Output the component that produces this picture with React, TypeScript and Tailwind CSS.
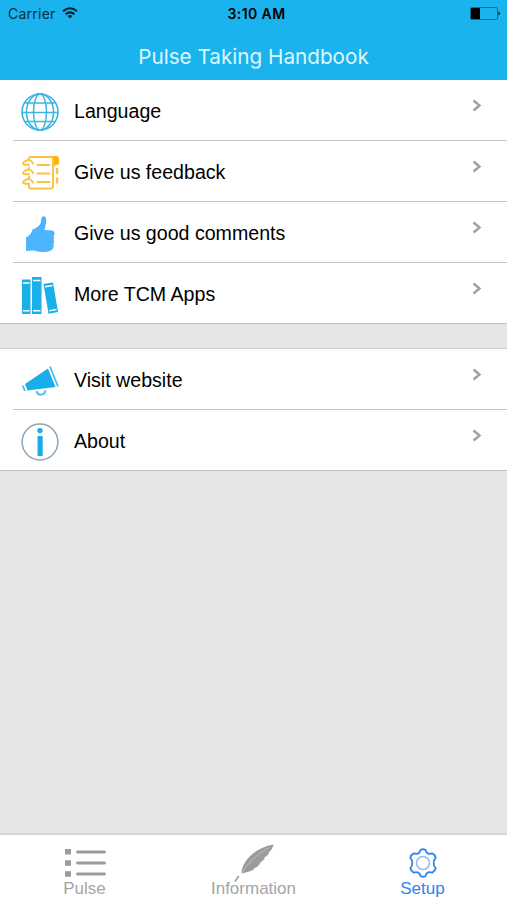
import type { ReactNode } from "react"

const GlobeIcon = () => (
  <svg width="38" height="38" viewBox="0 0 38 38" fill="none" stroke="#3db5e4" strokeWidth="1.5">
    <circle cx="19" cy="19" r="18" strokeWidth="1.6" />
    <ellipse cx="19" cy="19" rx="6.5" ry="18" />
    <ellipse cx="19" cy="19" rx="13.5" ry="18" />
    <path d="M1 19.5h36M3.5 10h31M3.5 28.5h31" />
  </svg>
)

const NotebookIcon = () => (
  <svg width="38" height="38" viewBox="0 -1 38 38" fill="none" stroke="#fcc340" strokeWidth="2" strokeLinecap="round">
    <path d="M8 4V4q0-2 2-2h22v29q0 2.500-2.500 2.500H10q-2 0-2-2V30M8 12.500v2M8 21.500v2" />
    <path d="M16.500 10h12M16.500 18.500h12M16.500 27h12" />
    <path d="M8 9.800H5.500q-3.500 0-3.500-1.500M3 7Q9 2.500 12 8.500M8 19.300H5.500q-3.500 0-3.500-1.500M3 16.500Q9 12 12 18M8 28.800H5.500q-3.500 0-3.500-1.500M3 26Q9 21.500 12 27.500" />
    <path d="M30 1h5q3 0 3 3v5l-5 2V5q0-3-3-4z" fill="#fdb515" stroke="none" />
    <path d="M36 13v6M36 22.500v6" strokeWidth="2.500" strokeLinecap="butt" />
  </svg>
)

const ThumbIcon = () => (
  <svg width="38" height="38" viewBox="0 0 38 38" fill="#4db5fd">
    <path d="M5 22.500Q10.500 19.500 11.500 14.500Q17 12.500 19.500 8.500L20.500 3Q21 .8 23 1.200C25.500 1.800 25.600 5 24.900 8.500L23.500 15L31 15.500Q34 16 33.500 19Q33.300 20.500 32.500 21Q33.800 22.500 32.700 25Q33.500 27 32.500 29Q33.300 31 31.800 34Q29 37.300 21 37Q16 36.800 13 35.500L5 36z" />
  </svg>
)

const BooksIcon = () => (
  <svg width="38" height="38" viewBox="0 0 38 38" fill="#19afe8">
    <path d="M1 3.500h8.500V38H1z" />
    <path d="M11 1h9.500v37H11z" />
    <path d="m22.500 8 9.500-1.500L37 36l-9.500 1.800z" />
    <path d="M2 7h6.500M2 34.800h6.500M12 4.500h7.500M12 34.800h7.500M24 10.700l7.500-1.300M28.300 34.700l7.200-1.300" stroke="#fff" strokeWidth="1.500" />
  </svg>
)

const MegaphoneIcon = () => (
  <svg width="38" height="38" viewBox="0 -1 38 38" fill="#1aaee8">
    <path d="M4 21 27 5.500l7.500 18.500L6.500 27.500z" />
    <path d="m1.500 22.500 2.500 5.500M29 3.500l8 20" fill="none" stroke="#4abdec" strokeWidth="1.800" />
    <path d="M15.500 28c1 5 8 5 9-.5" fill="none" stroke="#45bceb" strokeWidth="1.800" />
  </svg>
)

const InfoIcon = () => (
  <svg width="38" height="38" viewBox="0 0 38 38">
    <circle cx="19" cy="19" r="17.900" fill="none" stroke="#8fa6b8" strokeWidth="1.500" />
    <circle cx="19" cy="7.600" r="2.700" fill="#1aaee8" />
    <path d="M16.500 13h5.200v20h-5.200z" fill="#1aaee8" />
  </svg>
)

const ListIcon = () => (
  <svg width="42" height="30" viewBox="0 0 42 30" fill="#9b9b9b">
    <path d="M1 1h6v5.500H1zM1 12.200h6v5.500H1zM1 23.200h6v5.500H1z" />
    <path d="M13.500 4h27M13.500 15h27M13.500 26h27" stroke="#9b9b9b" strokeWidth="2.800" strokeLinecap="round" />
  </svg>
)

const FeatherIcon = () => (
  <svg width="40" height="40" viewBox="0 0 40 40" fill="#9b9b9b">
    <path d="M7.500 30.500C7.500 20 19 5 39.500 1.500Q38.500 6.500 34.500 9.500L35.500 9.700Q33.500 13 30 14.500L31 15Q28.500 18.500 25.500 20L26.500 20.500Q23 24.500 19 26L20 26.500Q14 29.500 7.500 30.500z" />
    <path d="M8 30C13 21 22 12 35 4.500" fill="none" stroke="#bdbdbd" strokeWidth="1" />
    <path d="M4.700 33 1 38.500" stroke="#9b9b9b" strokeWidth="1.600" />
  </svg>
)

const GearIcon = () => (
  <svg width="30" height="30" viewBox="0 0 30 30" fill="none" stroke="#2b86ee">
    <path d="M12.600 1.800Q15 .7 17.400 1.800C18.300 5.500 20.500 6.500 24.300 5.400Q27 6.800 27.700 9.800C25 12.500 25 17.500 27.700 20.200Q27 23.200 24.300 24.600C20.500 23.500 18.300 24.500 17.400 28.200Q15 29.300 12.600 28.200C11.700 24.500 9.500 23.500 5.700 24.600Q3 23.200 2.300 20.200C5 17.500 5 12.500 2.300 9.800Q3 6.800 5.700 5.400C9.500 6.500 11.700 5.500 12.600 1.800z" strokeWidth="1.800" strokeLinejoin="round" />
    <circle cx="15" cy="15" r="6.500" stroke="#8fbcf6" strokeWidth="1.500" />
  </svg>
)

type Item = { label: string; icon: ReactNode }

const mainItems: Item[] = [
  { label: "Language", icon: <GlobeIcon /> },
  { label: "Give us feedback", icon: <NotebookIcon /> },
  { label: "Give us good comments", icon: <ThumbIcon /> },
  { label: "More TCM Apps", icon: <BooksIcon /> },
]

const extraItems: Item[] = [
  { label: "Visit website", icon: <MegaphoneIcon /> },
  { label: "About", icon: <InfoIcon /> },
]

function Section({ items }: { items: Item[] }) {
  return (
    <div className="border-b border-[#bfbfbf] bg-white">
      {items.map((item, index) => (
        <button
          key={item.label}
          className={`block w-full text-left ${index === 0 ? "h-[60px]" : "h-[61px] pl-[13px]"}`}
        >
          <div
            className={`flex h-full items-start pr-[25px] ${
              index === 0 ? "pl-[21px] pt-[13px]" : "border-t border-[#c4c4c4] pl-2 pt-[13px]"
            }`}
          >
            {item.icon}
            <span className="ml-[15px] mt-[6px] h-[23px] flex-1 overflow-hidden text-[19.6px] leading-[24px]">
              {item.label}
            </span>
            <svg className="mt-[6px]" width="10" height="13" viewBox="0 0 10 13" fill="none" stroke="#a0a0a0" strokeWidth="2.4">
              <path d="M1.500 1.500 7.500 6.500 1.500 11.500" />
            </svg>
          </div>
        </button>
      ))}
    </div>
  )
}

export default function App() {
  return (
    <div className="flex h-[900px] w-[507px] flex-col overflow-hidden bg-[#e6e6e6] font-['Liberation_Sans',sans-serif] text-black">
      <header className="h-20 bg-[#1bb3ed] font-[Inter,sans-serif]">
        <div className="grid h-7 grid-cols-3 items-center pb-px pl-2 pr-[7px]">
          <div className="flex items-center gap-[6px] text-[14px] tracking-[0.25px] text-[#08303f]">
            Carrier
            <svg className="-mt-0.5" width="16" height="12" viewBox="0 0 16 12" fill="none" stroke="#0a2530" strokeWidth="2">
              <path d="M1 4.300q7-6 14 0M3.500 7.300q4.500-3.800 9 0" />
              <path d="M8 11.500 5.500 9q2.500-2 5 0z" fill="#0a2530" stroke="none" />
            </svg>
          </div>
          <div className="pl-[5px] text-center text-[14px] font-semibold tracking-[0.4px]">3:10 AM</div>
          <svg className="justify-self-end" width="30" height="13" viewBox="0 0 30 13">
            <rect x=".5" y=".5" width="27" height="12" rx="1.500" fill="none" stroke="#126c8f" />
            <path d="M1 1h9v11H1z" />
            <path d="M28.500 4.500q2.500 2 0 4z" />
          </svg>
        </div>
        <h1 className="text-center text-[20.7px] leading-[57px] text-[#dcf7ff]">Pulse Taking Handbook</h1>
      </header>

      <main className="flex flex-1 flex-col gap-6">
        <Section items={mainItems} />
        <div className="border-t border-[#cfcfcf]">
          <Section items={extraItems} />
        </div>
      </main>

      <nav className="grid h-[67px] grid-cols-3 border-t-2 border-[#d6d6d6] bg-white text-[17px] leading-5 text-[#a5a5a5]">
        <button className="flex flex-col items-center pt-[13px]">
          <ListIcon />
          <span className="mt-px">Pulse</span>
        </button>
        <button className="flex flex-col items-center pt-2">
          <FeatherIcon />
          <span className="-mt-1">Information</span>
        </button>
        <button className="flex flex-col items-center pt-[13px] text-[#2b86ee]">
          <GearIcon />
          <span className="mt-px">Setup</span>
        </button>
      </nav>
    </div>
  )
}
